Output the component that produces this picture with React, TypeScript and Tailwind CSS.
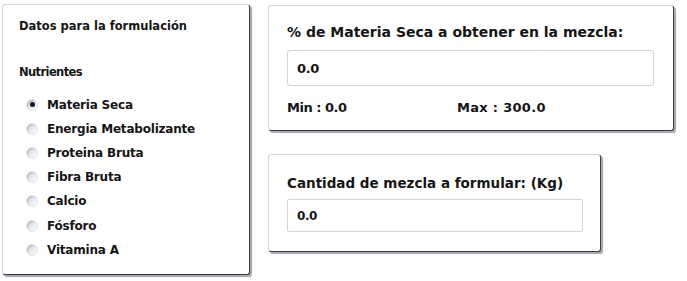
import React, { useState } from 'react';

const NUTRIENTES = [
  'Materia Seca',
  'Energia Metabolizante',
  'Proteina Bruta',
  'Fibra Bruta',
  'Calcio',
  'Fósforo',
  'Vitamina A',
];

const Radio = ({ checked }: { checked: boolean }) => (
  <span className="flex h-[12px] w-[12px] items-center justify-center rounded-full border border-gray-200 bg-gradient-to-br from-gray-300 to-white shadow-[inset_1px_1px_1px_rgba(0,0,0,0.2)]">
    {checked && <span className="h-[5px] w-[5px] rounded-full bg-gray-900" />}
  </span>
);

export default function App() {
  const [selected, setSelected] = useState(0);

  return (
    <div className="relative h-[281px] w-[687px] bg-white font-['DejaVu_Sans',sans-serif] text-[#151515]">
      <div className="flex gap-[18px] pl-[2px] pt-[4px]">
        {/* Datos para la formulación */}
        <div className="flex h-[271px] w-[248px] flex-col rounded-[3px] border border-gray-300 border-r-gray-700 border-b-gray-700 bg-white pl-[16px] pt-[13px] shadow-[2px_2px_1px_rgba(0,0,0,0.35)]">
          <p className="text-[11.5px] font-bold">Datos para la formulación</p>
          <p className="mt-[29px] text-[11.5px] font-bold tracking-[-0.6px]">Nutrientes</p>
          <ul className="mt-[11px] flex flex-col">
            {NUTRIENTES.map((n, i) => (
              <li
                key={n}
                className="flex h-[24.2px] cursor-pointer items-center gap-[9px] pl-[7px]"
                onClick={() => setSelected(i)}
              >
                <Radio checked={selected === i} />
                <span className="text-[12px] font-bold tracking-[-0.2px]">{n}</span>
              </li>
            ))}
          </ul>
        </div>

        <div className="flex flex-col gap-[23px] pt-[1px]">
          {/* % Materia Seca */}
          <div className="flex h-[126px] w-[406px] flex-col rounded-[3px] border border-gray-300 border-r-gray-700 border-b-gray-700 bg-white px-[18px] pt-[16px] shadow-[2px_2px_1px_rgba(0,0,0,0.35)]">
            <p className="text-[14px] font-bold">% de Materia Seca a obtener en la mezcla:</p>
            <input
              className="mt-[7px] h-[36px] w-[367px] rounded-[3px] border border-gray-300 px-[9px] text-[13px] font-bold tracking-[-0.4px] text-[#151515] outline-none"
              defaultValue="0.0"
            />
            <div className="mt-[12px] flex text-[13px] font-bold">
              <span className="w-[170px] tracking-[-0.5px]">Min : 0.0</span>
              <span className="tracking-[0.3px]">Max : 300.0</span>
            </div>
          </div>

          {/* Cantidad de mezcla */}
          <div className="flex h-[98px] w-[333px] flex-col rounded-[3px] border border-gray-300 border-r-gray-700 border-b-gray-700 bg-white px-[18px] pt-[18px] shadow-[2px_2px_1px_rgba(0,0,0,0.35)]">
            <p className="text-[13.5px] font-bold">Cantidad de mezcla a formular: (Kg)</p>
            <input
              className="mt-[6px] h-[33px] w-[296px] rounded-[2px] border border-gray-300 px-[9px] text-[12px] font-bold tracking-[-0.4px] text-[#151515] outline-none"
              defaultValue="0.0"
            />
          </div>
        </div>
      </div>
    </div>
  );
}
